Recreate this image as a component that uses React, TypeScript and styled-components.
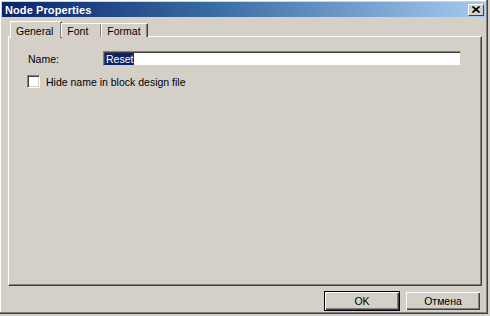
import React from "react";
import styled, { createGlobalStyle } from "styled-components";

const GlobalStyle = createGlobalStyle`
  html, body {
    margin: 0;
    padding: 0;
    background: #d4d0c8;
  }
  body {
    width: 490px;
    height: 316px;
    overflow: hidden;
    font-family: "Liberation Sans", Arial, sans-serif;
    font-size: 10.5px;
    color: #000;
  }
`;

const Window = styled.div`
  width: 488px;
  height: 314px;
  box-sizing: border-box;
  display: flex;
  flex-direction: column;
  background: #d4d0c8;
  border-right: 1px solid #404040;
  border-bottom: 1px solid #404040;
  box-shadow: inset -1px -1px 0 #808080, inset 1px 1px 0 #ffffff;
`;

const TitleBar = styled.div`
  height: 15px;
  margin: 2px 2px 0 2px;
  display: flex;
  align-items: center;
  justify-content: space-between;
  padding: 0 1px 0 3px;
  background: linear-gradient(to right, #0a246a 0%, #3a6ea5 45%, #a6caf0 100%);
`;

const Title = styled.span`
  color: #fff;
  font-weight: bold;
  font-size: 11px;
  letter-spacing: 0.1px;
`;

const CloseButton = styled.div`
  width: 16px;
  height: 12px;
  box-sizing: border-box;
  display: flex;
  align-items: center;
  justify-content: center;
  background: #d4d0c8;
  border-top: 1px solid #fff;
  border-left: 1px solid #fff;
  border-right: 1px solid #404040;
  border-bottom: 1px solid #404040;
`;

const Content = styled.div`
  flex: 1;
  display: flex;
  flex-direction: column;
  padding: 4px 5px 0 8px;
`;

const TabsRow = styled.div`
  display: flex;
  align-items: flex-end;
  height: 16px;
  padding-left: 2px;
  margin-bottom: -1px;
  position: relative;
  z-index: 1;
`;

const Tab = styled.div<{ $active?: boolean }>`
  box-sizing: border-box;
  min-width: 41px;
  height: ${(p) => (p.$active ? "17px" : "14px")};
  padding: ${(p) => (p.$active ? "1px 8px 0 5px" : "0 6px 0 5px")};
  display: flex;
  align-items: center;
  background: #d4d0c8;
  border-top: 1px solid #fff;
  border-left: 1px solid #fff;
  border-right: 1px solid #404040;
  box-shadow: inset -1px 0 0 #808080;
  margin-left: ${(p) => (p.$active ? "0" : "-1px")};
  ${(p) => (p.$active ? "margin-bottom: -1px;" : "")}
`;

const Panel = styled.div`
  height: 250px;
  box-sizing: border-box;
  border-top: 1px solid #fff;
  border-left: 1px solid #fff;
  border-right: 1px solid #404040;
  border-bottom: 1px solid #404040;
  box-shadow: inset -1px -1px 0 #808080;
  padding: 14px 0 0 19px;
  display: flex;
  flex-direction: column;
`;

const FieldRow = styled.div`
  display: flex;
  align-items: center;
  height: 15px;
`;

const Label = styled.span`
  width: 75px;
`;

const TextBox = styled.div`
  width: 358px;
  height: 15px;
  box-sizing: border-box;
  background: #fff;
  border-top: 1px solid #808080;
  border-left: 1px solid #808080;
  border-right: 1px solid #d4d0c8;
  border-bottom: 1px solid #d4d0c8;
  box-shadow: inset 1px 1px 0 #404040;
  padding: 0 0 0 1px;
  display: flex;
  align-items: center;
`;

const Selected = styled.span`
  background: #0a246a;
  color: #fff;
  line-height: 12px;
  padding: 0 1px;
`;

const CheckRow = styled.div`
  display: flex;
  align-items: center;
  margin-top: 9px;
  margin-left: -1px;
  gap: 6px;
`;

const CheckBox = styled.div`
  width: 13px;
  height: 13px;
  box-sizing: border-box;
  background: #fff;
  border-top: 1px solid #808080;
  border-left: 1px solid #808080;
  border-right: 1px solid #fff;
  border-bottom: 1px solid #fff;
  box-shadow: inset 1px 1px 0 #404040, inset -1px -1px 0 #d4d0c8;
`;

const ButtonRow = styled.div`
  display: flex;
  justify-content: flex-end;
  gap: 5px;
  margin-top: 5px;
  margin-right: 1px;
`;

const Button = styled.div<{ $default?: boolean }>`
  width: 76px;
  height: 20px;
  box-sizing: border-box;
  display: flex;
  align-items: center;
  justify-content: center;
  background: #d4d0c8;
  border: 1px solid ${(p) => (p.$default ? "#000" : "#d4d0c8")};
  box-shadow: inset 1px 1px 0 #fff, inset -1px -1px 0 #404040,
    inset -2px -2px 0 #808080;
`;

export default function App() {
  return (
    <>
      <GlobalStyle />
      <Window>
        <TitleBar>
          <Title>Node Properties</Title>
          <CloseButton>
            <svg width="8" height="7" viewBox="0 0 8 7">
              <path d="M0.5 0.5 L7.5 6.5 M7.5 0.5 L0.5 6.5" stroke="#000" strokeWidth="1.6" />
            </svg>
          </CloseButton>
        </TitleBar>
        <Content>
          <TabsRow>
            <Tab $active>General</Tab>
            <Tab>Font</Tab>
            <Tab>Format</Tab>
          </TabsRow>
          <Panel>
            <FieldRow>
              <Label>Name:</Label>
              <TextBox>
                <Selected>Reset</Selected>
              </TextBox>
            </FieldRow>
            <CheckRow>
              <CheckBox />
              <span>Hide name in block design file</span>
            </CheckRow>
          </Panel>
          <ButtonRow>
            <Button $default>OK</Button>
            <Button>Отмена</Button>
          </ButtonRow>
        </Content>
      </Window>
    </>
  );
}
